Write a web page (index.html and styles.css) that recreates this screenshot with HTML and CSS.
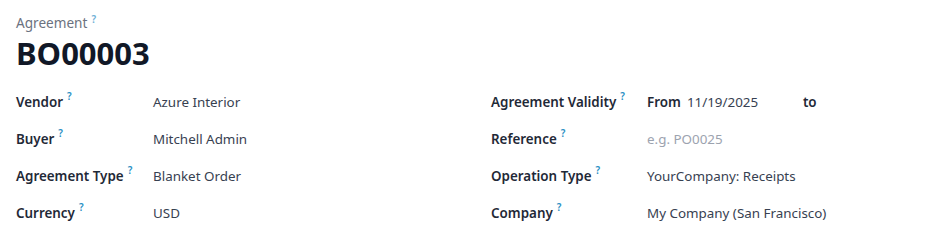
FILE: index.html
```html
<!DOCTYPE html>
<html>
<head>
<meta charset="utf-8">
<link rel="stylesheet" href="styles.css">
</head>
<body>
<div class="sheet">
  <div class="title-block">
    <div class="title-label">Agreement<sup class="help">?</sup></div>
    <h1 class="title">BO00003</h1>
  </div>
  <div class="groups">
    <div class="group group-left">
      <div class="lbl">Vendor<sup class="help">?</sup></div><div class="val">Azure Interior</div>
      <div class="lbl">Buyer<sup class="help">?</sup></div><div class="val">Mitchell Admin</div>
      <div class="lbl">Agreement Type<sup class="help">?</sup></div><div class="val">Blanket Order</div>
      <div class="lbl">Currency<sup class="help">?</sup></div><div class="val">USD</div>
    </div>
    <div class="group group-right">
      <div class="lbl">Agreement Validity<sup class="help">?</sup></div>
      <div class="val validity"><span class="from">From</span><span class="date">11/19/2025</span><span class="to">to</span></div>
      <div class="lbl">Reference<sup class="help">?</sup></div><div class="val placeholder">e.g. PO0025</div>
      <div class="lbl">Operation Type<sup class="help">?</sup></div><div class="val">YourCompany: Receipts</div>
      <div class="lbl">Company<sup class="help">?</sup></div><div class="val">My Company (San Francisco)</div>
    </div>
  </div>
</div>
</body>
</html>
```
FILE: styles.css
```css
html, body { margin: 0; padding: 0; background: #fff; }
body { font-family: "Noto Sans", "Open Sans", sans-serif; color: #374151; font-size: 13.4px; }
.sheet { padding: 13px 16px 0 16px; }
.title-label { font-size: 13.6px; color: #6b7280; line-height: 20px; }
.help { color: #2a8fc4; font-size: 10px; font-weight: 600; margin-left: 4px; vertical-align: top; position: relative; top: -4px; }
.title-label .help { color: #6fb0d6; }
.title { margin: 0; font-size: 31px; font-weight: 700; color: #111827; line-height: 40px; }
.groups { display: grid; grid-template-columns: 475px 1fr; margin-top: 10px; }
.group { display: grid; grid-auto-rows: 37px; align-items: center; }
.group-left { grid-template-columns: 137px 1fr; }
.group-right { grid-template-columns: 156px 1fr; }
.lbl { font-weight: 600; color: #1f2937; }
.val { color: #374151; }
.placeholder { color: #9ca3af; }
.validity { display: flex; }
.from { font-weight: 600; color: #1f2937; margin-right: 6px; }
.date { width: 116px; }
.to { font-weight: 600; color: #1f2937; }
```
